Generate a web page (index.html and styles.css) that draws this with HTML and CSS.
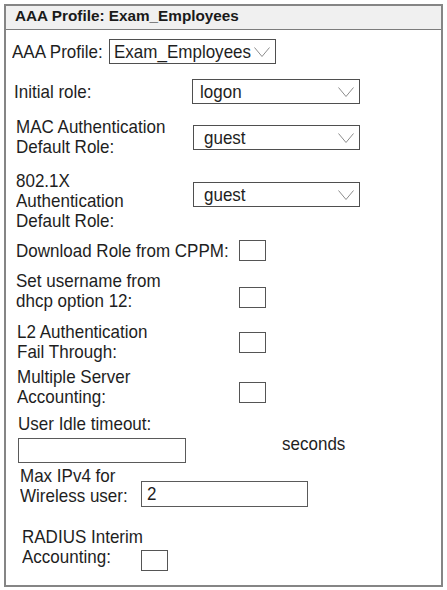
FILE: index.html
```html
<!DOCTYPE html>
<html lang="en">
<head>
<meta charset="utf-8">
<title>AAA Profile: Exam_Employees</title>
<link rel="stylesheet" href="styles.css">
</head>
<body>
<div class="frame">
  <div class="head">AAA Profile: Exam_Employees</div>
  <div class="body">
    <div class="row row-profile">
      <span class="label w-profile">AAA Profile:</span>
      <div class="select sel-profile">
        <span class="txt">Exam_Employees</span>
        <svg class="chev" width="16" height="10" viewBox="0 0 16 10"><polyline points="0.5,0.5 8,9.5 15.5,0.5"/></svg>
      </div>
    </div>

    <div class="row row-initial">
      <span class="label w-initial">Initial role:</span>
      <div class="select sel-wide pad-8">
        <span class="txt">logon</span>
        <svg class="chev" width="16" height="10" viewBox="0 0 16 10"><polyline points="0.5,0.5 8,9.5 15.5,0.5"/></svg>
      </div>
    </div>

    <div class="row row-mac">
      <span class="label w-role">MAC Authentication<br>Default Role:</span>
      <div class="select sel-role pad-11 top-8">
        <span class="txt">guest</span>
        <svg class="chev" width="16" height="10" viewBox="0 0 16 10"><polyline points="0.5,0.5 8,9.5 15.5,0.5"/></svg>
      </div>
    </div>

    <div class="row row-dot1x">
      <span class="label w-role">802.1X<br>Authentication<br>Default Role:</span>
      <div class="select sel-role pad-11 top-11">
        <span class="txt">guest</span>
        <svg class="chev" width="16" height="10" viewBox="0 0 16 10"><polyline points="0.5,0.5 8,9.5 15.5,0.5"/></svg>
      </div>
    </div>

    <div class="row row-cppm">
      <span class="label w-check top-1">Download Role from CPPM:</span>
      <span class="check"></span>
    </div>

    <div class="row row-dhcp">
      <span class="label w-check">Set username from<br>dhcp option 12:</span>
      <span class="check top-16"></span>
    </div>

    <div class="row row-l2">
      <span class="label w-check-l2">L2 Authentication<br>Fail Through:</span>
      <span class="check top-10"></span>
    </div>

    <div class="row row-multi">
      <span class="label w-check-l2">Multiple Server<br>Accounting:</span>
      <span class="check top-15"></span>
    </div>

    <div class="row row-idle">
      <span class="label">User Idle timeout:</span>
    </div>

    <div class="row row-idle-input">
      <span class="textbox tb-idle"></span>
      <span class="txt unit">seconds</span>
    </div>

    <div class="row row-ipv4">
      <span class="label w-ipv4">Max IPv4 for<br>Wireless user:</span>
      <span class="textbox tb-ipv4"><span class="txt">2</span></span>
    </div>

    <div class="row row-radius">
      <span class="label w-radius">RADIUS Interim<br>Accounting:</span>
      <span class="check top-23"></span>
    </div>
  </div>
</div>
</body>
</html>
```

FILE: styles.css
```css
html, body {
  margin: 0;
  padding: 0;
  background: #ffffff;
}

body {
  padding: 4px 0 0 4px;
  font-family: "Liberation Sans", Arial, sans-serif;
  color: #1e1e1e;
}

.frame {
  box-sizing: border-box;
  width: 439px;
  height: 583px;
  border: 2px solid #858585;
  display: flex;
  flex-direction: column;
}

.head {
  flex: none;
  box-sizing: border-box;
  height: 24px;
  padding: 0 0 3px 9px;
  background: #f0f0f0;
  border-bottom: 1px solid #7c7c7c;
  font-weight: bold;
  font-size: 15.3px;
  line-height: 20px;
  color: #1a1a1a;
}

.body {
  display: flex;
  flex-direction: column;
  font-size: 17px;
  line-height: 20px;
}

.row {
  display: flex;
  align-items: flex-start;
}

/* form text is set tall and slightly condensed */
.label,
.txt {
  font-size: 19px;
  line-height: 20px;
  transform: scaleX(0.895);
  transform-origin: 0 50%;
}

.label {
  flex: none;
  white-space: nowrap;
}

.txt {
  display: inline-block;
  white-space: nowrap;
}

/* controls */
.select {
  box-sizing: border-box;
  height: 25px;
  border: 1px solid #4f4f4f;
  display: flex;
  align-items: center;
  padding: 0 5px 0 4px;
  flex: none;
}

/* the value takes the free space so the arrow stays at the right edge */
.select .txt {
  flex: 1 1 0;
  min-width: 0;
}

.chev {
  flex: none;
  display: block;
}

.chev polyline {
  fill: none;
  stroke: #8c8c8c;
  stroke-width: 1;
}

.check {
  box-sizing: border-box;
  width: 27px;
  height: 21px;
  border: 1px solid #555555;
  flex: none;
}

.textbox {
  box-sizing: border-box;
  border: 1px solid #5a5a5a;
  height: 25px;
  flex: none;
  padding-left: 5px;
  display: flex;
  align-items: center;
}

/* row placement */
.row-profile { margin-top: 9px; padding-left: 6px; align-items: center; }
.w-profile { width: 97px; }
.sel-profile { width: 167px; }

.row-initial { margin-top: 15px; padding-left: 8px; align-items: center; }
.w-initial { width: 178px; }
.sel-wide { width: 168px; }

.row-mac { margin-top: 13px; padding-left: 10px; }
.row-dot1x { margin-top: 14px; padding-left: 10px; }
.w-role { width: 177px; }
.sel-role { width: 167px; }

.row-cppm { margin-top: 9px; padding-left: 10px; }
.row-dhcp { margin-top: 10px; padding-left: 10px; }
.w-check { width: 223px; }

.row-l2 { margin-top: 11px; padding-left: 11px; }
.row-multi { margin-top: 5px; padding-left: 11px; }
.w-check-l2 { width: 222px; }

.row-idle { margin-top: 7px; padding-left: 12px; }
.row-idle-input { padding-left: 12px; }
.tb-idle { width: 168px; margin-top: 4px; }
.unit { margin-left: 96px; }

.row-ipv4 { margin-top: 3px; padding-left: 14px; }
.w-ipv4 { width: 121px; }
.tb-ipv4 { width: 167px; height: 26px; margin-top: 15px; }

.row-radius { margin-top: 20px; padding-left: 16px; }
.w-radius { width: 119px; }

/* padding and offsets */
.pad-8 { padding-left: 7px; }
.pad-11 { padding-left: 10px; }
.top-1 { margin-top: 1px; }
.top-8 { margin-top: 8px; }
.top-10 { margin-top: 10px; }
.top-11 { margin-top: 11px; }
.top-15 { margin-top: 15px; }
.top-16 { margin-top: 16px; }
.top-23 { margin-top: 23px; }
```
